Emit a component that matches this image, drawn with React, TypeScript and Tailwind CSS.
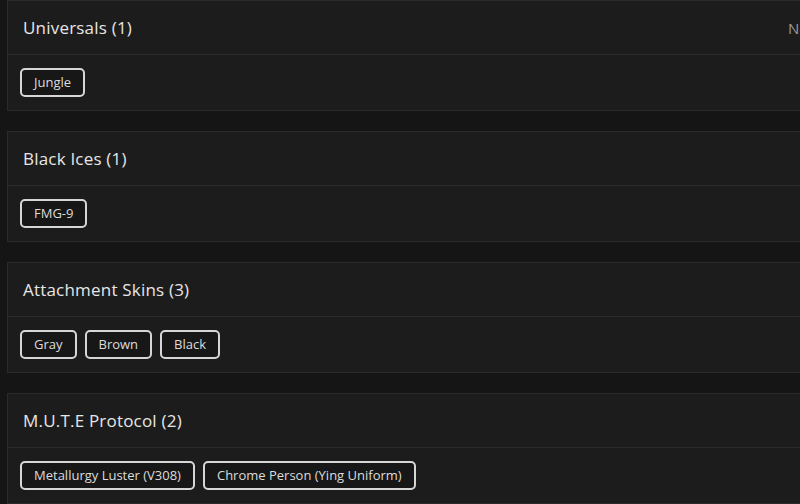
import React from 'react';

interface Group {
  name: string;
  items: string[];
  note?: string;
}

const groups: Group[] = [
  { name: 'Universals', items: ['Jungle'], note: 'Not owned' },
  { name: 'Black Ices', items: ['FMG-9'] },
  { name: 'Attachment Skins', items: ['Gray', 'Brown', 'Black'] },
  { name: 'M.U.T.E Protocol', items: ['Metallurgy Luster (V308)', 'Chrome Person (Ying Uniform)'] },
];

function Chip({ label }: { label: string }) {
  return (
    <span className="flex h-[29px] items-center rounded-[5px] border-2 border-[#d6d6d6] bg-[#171717] px-3 text-[13px] text-[#dcdcdc]">
      {label}
    </span>
  );
}

export default function App() {
  return (
    <div
      className="h-[504px] w-[800px] overflow-hidden bg-[#151515] pl-[7px]"
      style={{ fontFamily: '"Open Sans", "Liberation Sans", sans-serif' }}
    >
      <div className="flex w-[900px] flex-col gap-[20px]">
        {groups.map((g) => (
          <div key={g.name} className="border border-[#2a2a2a] bg-[#1c1c1c]">
            <div className="flex h-[54px] items-center border-b border-[#2c2c2c] px-[15px] pt-[1px]">
              <span className="w-[765px] shrink-0 text-[17px] font-medium tracking-[0.2px] text-[#e6e6e6]">
                {g.name} ({g.items.length})
              </span>
              {g.note && <span className="text-[15px] text-[#9a9a9a]">{g.note}</span>}
            </div>
            <div className="flex h-[55px] items-center gap-2 px-3">
              {g.items.map((it) => (
                <Chip key={it} label={it} />
              ))}
            </div>
          </div>
        ))}
      </div>
    </div>
  );
}
